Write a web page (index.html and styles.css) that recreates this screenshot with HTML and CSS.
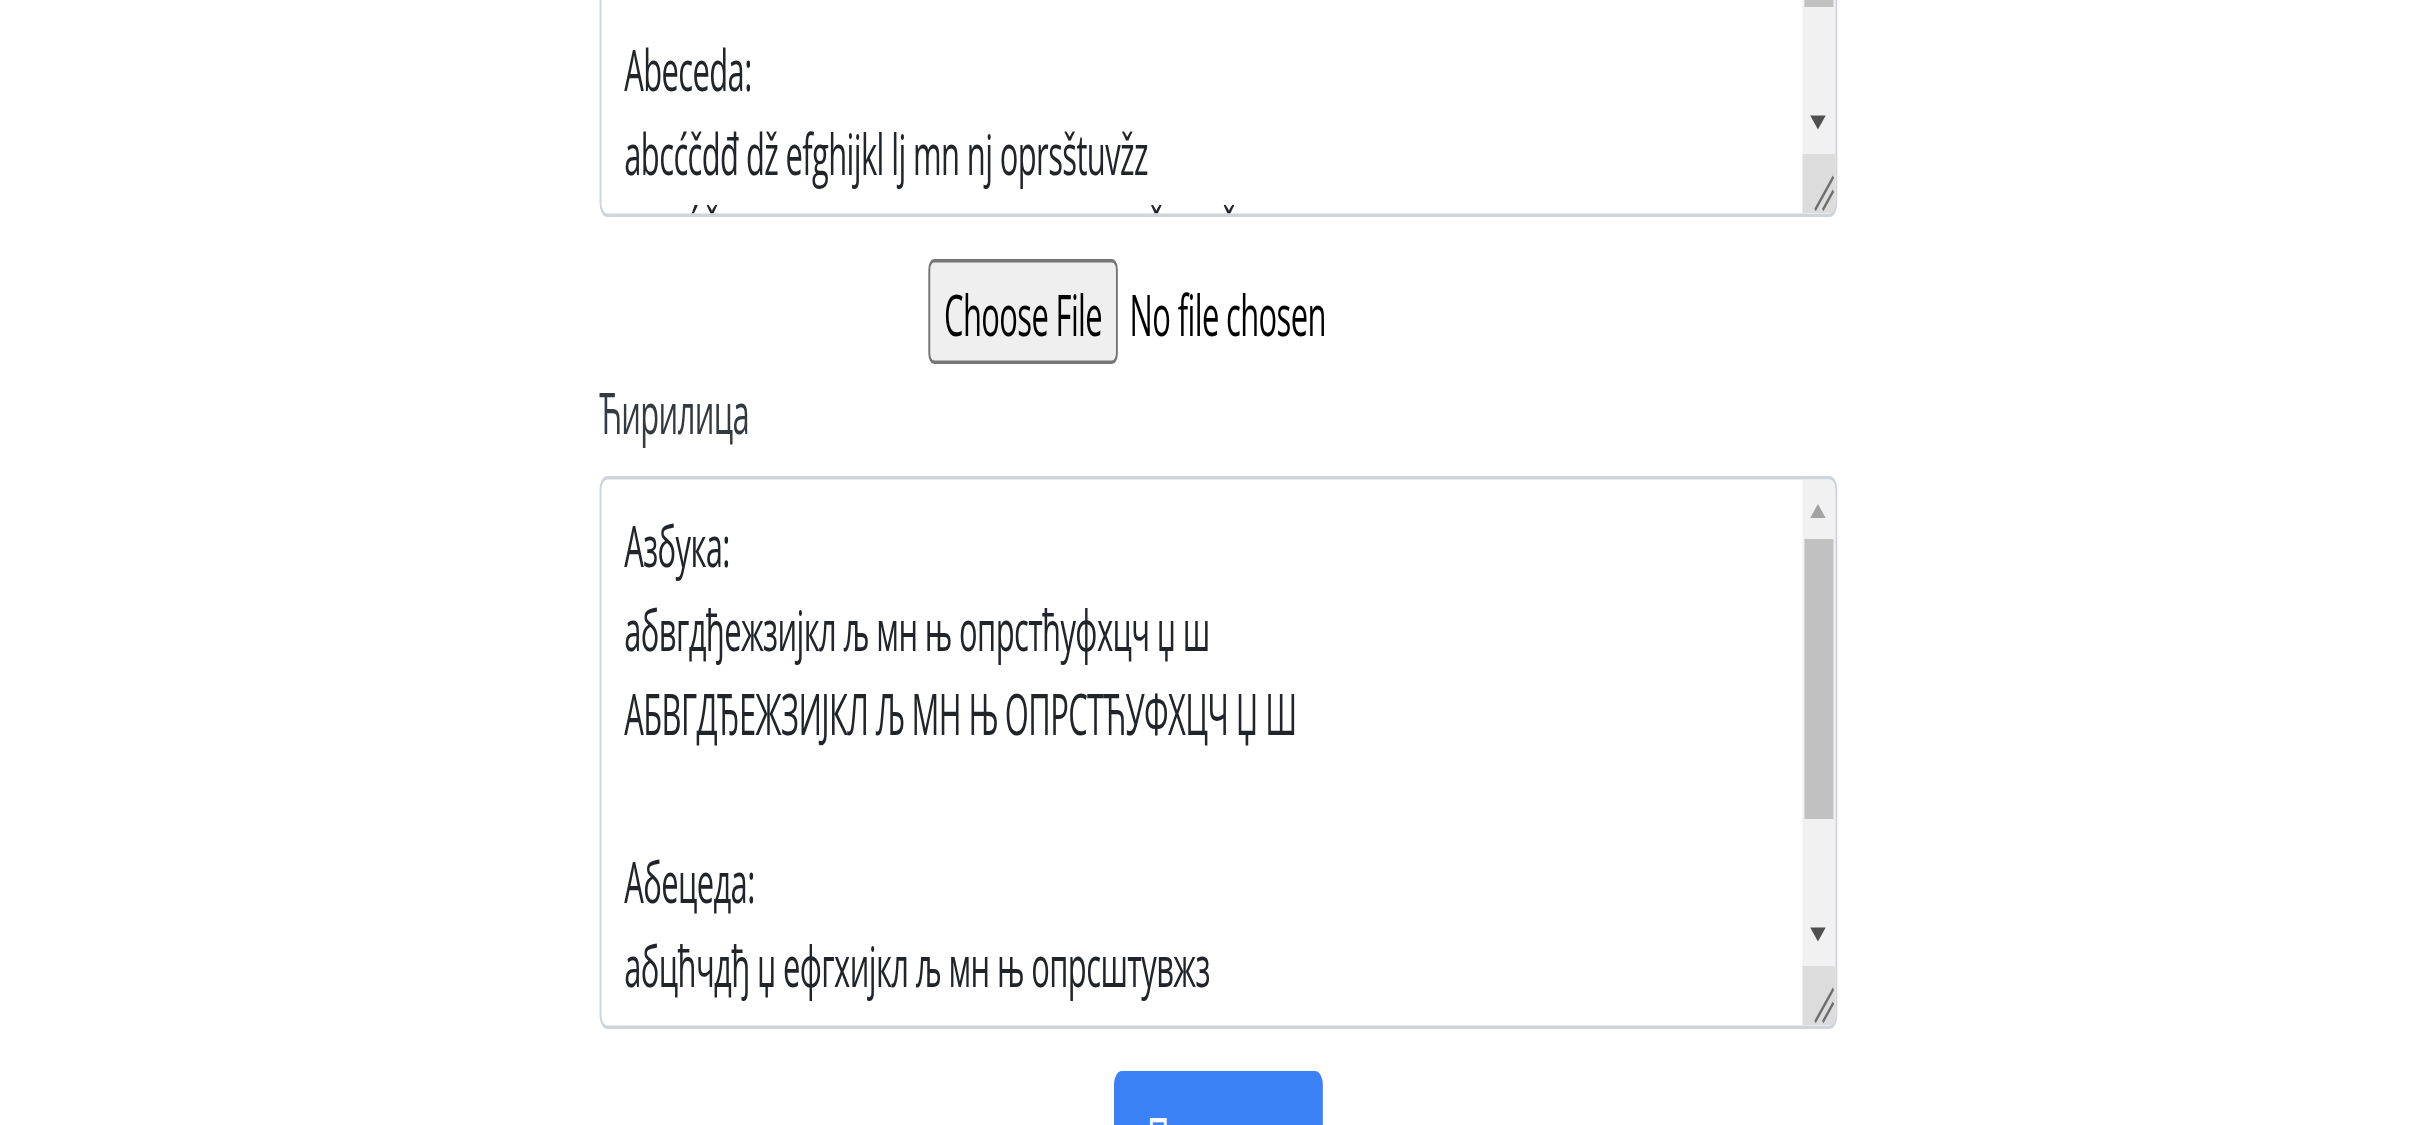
FILE: index.html
```html
<!DOCTYPE html>
<html lang="sr">
<head>
<meta charset="utf-8">
<title>Пресловљавање</title>
<link rel="stylesheet" href="styles.css">
</head>
<body>
<div class="stage">
  <main class="container">
    <div class="textbox">
      <div class="textbox-text">
        <div class="line">Azbuka:</div>
        <div class="line">abvgdđežzijkl lj mn nj oprstćufhcč dž š</div>
        <div class="line">ABVGDĐEŽZIJKL Lj MN Nj OPRSTĆUFHCČ Dž Š</div>
        <div class="line"></div>
        <div class="line">Abeceda:</div>
        <div class="line">abcćčdđ dž efghijkl lj mn nj oprsštuvžz</div>
        <div class="line">ABCĆČDĐ Dž EFGHIJKL Lj MN Nj OPRSŠTUVŽZ</div>
      </div>
      <div class="scrollbar">
        <div class="sb-button"><span class="arrow-up"></span></div>
        <div class="sb-track"><div class="sb-thumb"></div></div>
        <div class="sb-button"><span class="arrow-down"></span></div>
        <div class="sb-corner">
          <svg class="grip" viewBox="0 0 17 17" preserveAspectRatio="none"><path d="M6.5 16 L16 6.5 M10.5 16 L16 10.5" /></svg>
        </div>
      </div>
    </div>

    <div class="file-row">
      <span class="file-button">Choose File</span>
      <span class="file-name">No file chosen</span>
    </div>

    <label class="field-label">Ћирилица</label>

    <div class="textbox">
      <div class="textbox-text">
        <div class="line">Азбука:</div>
        <div class="line">абвгдђежзијкл љ мн њ опрстћуфхцч џ ш</div>
        <div class="line">АБВГДЂЕЖЗИЈКЛ Љ МН Њ ОПРСТЋУФХЦЧ Џ Ш</div>
        <div class="line"></div>
        <div class="line">Абецеда:</div>
        <div class="line">абцћчдђ џ ефгхијкл љ мн њ опрсштувжз</div>
        <div class="line">АБЦЋЧДЂ Џ ЕФГХИЈКЛ Љ МН Њ ОПРСШТУВЖЗ</div>
      </div>
      <div class="scrollbar">
        <div class="sb-button"><span class="arrow-up"></span></div>
        <div class="sb-track"><div class="sb-thumb"></div></div>
        <div class="sb-button"><span class="arrow-down"></span></div>
        <div class="sb-corner">
          <svg class="grip" viewBox="0 0 17 17" preserveAspectRatio="none"><path d="M6.5 16 L16 6.5 M10.5 16 L16 10.5" /></svg>
        </div>
      </div>
    </div>

    <div class="actions">
      <button class="btn-primary" type="button">Преслови</button>
    </div>
  </main>
</div>
</body>
</html>
```

FILE: styles.css
```css
html, body {
  margin: 0;
  padding: 0;
  background: #ffffff;
  overflow: hidden;
}

body {
  height: 1125px;
}

.stage {
  width: 1259.6px;
  height: 321.5px;
  overflow: hidden;
  transform: scale(1.934, 3.5);
  transform-origin: 0 0;
  font-family: "Open Sans", "Noto Sans", "DejaVu Sans", sans-serif;
  font-size: 16px;
  line-height: 24px;
  letter-spacing: -0.02em;
  color: #212529;
}

.container {
  width: 640px;
  margin: -95.8px auto 0;
  display: flex;
  flex-direction: column;
}

.textbox {
  box-sizing: border-box;
  height: 157.5px;
  border: 1px solid #ced4da;
  border-radius: 4px;
  background: #ffffff;
  display: flex;
  overflow: hidden;
}

.textbox-text {
  flex: 1;
  padding: 6.9px 12px 6px;
  overflow: hidden;
}

.line {
  height: 24px;
  white-space: pre;
}

.scrollbar {
  width: 17px;
  flex: none;
  display: flex;
  flex-direction: column;
  background: #f1f1f1;
}

.sb-button {
  height: 17px;
  flex: none;
  display: flex;
  align-items: center;
  justify-content: center;
}

.arrow-up {
  width: 0;
  height: 0;
  border-left: 4px solid transparent;
  border-right: 4px solid transparent;
  border-bottom: 4px solid #a3a3a3;
}

.arrow-down {
  width: 0;
  height: 0;
  border-left: 4px solid transparent;
  border-right: 4px solid transparent;
  border-top: 4px solid #505050;
}

.sb-track {
  flex: 1;
  display: flex;
  flex-direction: column;
}

.sb-thumb {
  height: 80px;
  margin: 0 1px;
  background: #c1c1c1;
}

.sb-corner {
  height: 17px;
  flex: none;
  background: #dcdcdc;
}

.grip {
  display: block;
  width: 17px;
  height: 17px;
}

.grip path {
  stroke: #6e6e6e;
  stroke-width: 1;
  fill: none;
}

.file-row {
  display: flex;
  align-items: center;
  margin: 12.4px 0 2px 170.6px;
  color: #000000;
}

.file-button {
  box-sizing: border-box;
  width: 97.2px;
  height: 29.5px;
  padding-top: 1.8px;
  display: flex;
  align-items: center;
  justify-content: center;
  background: #efefef;
  border: 1px solid #767676;
  border-radius: 3px;
}

.file-name {
  margin-left: 6.5px;
  padding-top: 1.8px;
}

.field-label {
  display: block;
  margin-bottom: 6.8px;
  color: #343a40;
}

.actions {
  display: flex;
  justify-content: center;
  margin-top: 12px;
}

.btn-primary {
  box-sizing: border-box;
  width: 107.5px;
  height: 38px;
  padding: 6px 16px;
  border: 1px solid #3b82f6;
  border-radius: 4px;
  background: #3b82f6;
  color: #ffffff;
  font: inherit;
  letter-spacing: inherit;
  line-height: 24px;
}
```
